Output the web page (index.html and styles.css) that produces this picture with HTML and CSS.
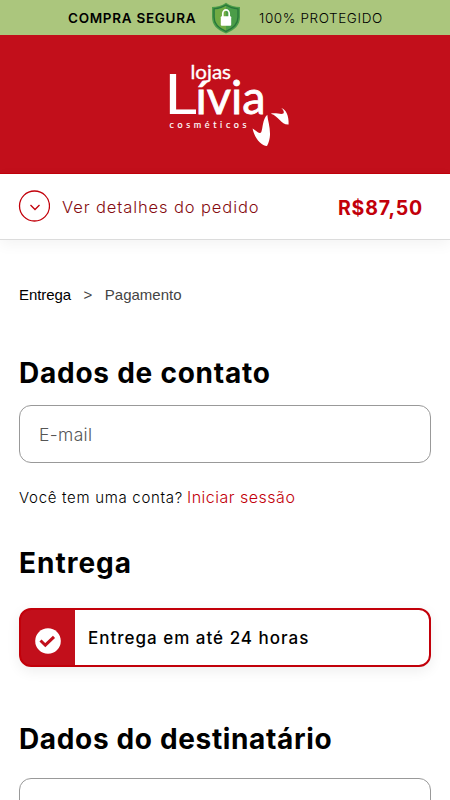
FILE: index.html
```html
<!DOCTYPE html>
<html lang="pt-BR">
<head>
<meta charset="utf-8">
<meta name="viewport" content="width=device-width, initial-scale=1">
<title>Lojas Lívia Cosméticos</title>
<link rel="stylesheet" href="styles.css">
</head>
<body>
<div class="secure-bar">
  <strong class="secure-title">COMPRA SEGURA</strong>
  <svg class="shield" viewBox="0 0 30 32" aria-hidden="true">
    <path d="M15 .8C11 4 6 5 1 5v10c0 8 5 13 14 16.500C24 28 29 23 29 15V5C24 5 19 4 15 .8z" fill="#4b9d48"/>
    <path d="M15 3C11 5.600 7 6.600 3 6.800V15c0 7 4 11 12 14.400C23 26 27 22 27 15V6.800C23 6.600 19 5.600 15 3z" fill="#4b9d48" stroke="#28763b" stroke-width="1.300"/>
    <path d="M15 4C11 6.500 8 7.200 4 7.500V15c0 6 3.500 10 11 13.400z" fill="#71ab43"/>
    <path d="M11.800 15v-3.500a3.200 3.600 0 0 1 6.400 0V15" fill="none" stroke="#fff" stroke-width="1.700"/>
    <rect x="9.800" y="14.300" width="10.400" height="9.500" rx="1" fill="#fff"/>
  </svg>
  <span class="secure-note">100% PROTEGIDO</span>
</div>
<header class="brand">
  <svg class="logo" viewBox="0 0 130 90" role="img" aria-label="Lojas Lívia Cosméticos">
    <g class="logo-text">
      <text class="logo-small" x="30.500" y="22.500" textLength="40.500" lengthAdjust="spacingAndGlyphs">lojas</text>
      <text class="logo-cap" x="4" y="58" textLength="33" lengthAdjust="spacingAndGlyphs">L</text>
      <text class="logo-name" x="35.500" y="58" textLength="70" lengthAdjust="spacingAndGlyphs">ívia</text>
      <text class="logo-tag" x="9.500" y="71.500" textLength="77">cosméticos</text>
    </g>
    <path class="logo-mark" d="M107.300 58.800C107.800 65 110.300 71 110 79C109.800 83 109 86 107 90C101 90 94 81 92.600 72.500C97 75.500 100 78.500 101.300 76C103 72 102.500 63 107.300 58.800z"/>
    <path class="logo-mark" d="M110.800 57.700C116 56.500 121 59 123.300 57.600C124.700 56 123 53.500 121.300 52.300C126 53 129 60 128.600 68.500C121 69 119 60 110.800 57.700z"/>
  </svg>
</header>
<section class="summary">
  <svg class="toggle" viewBox="0 0 32 32" aria-hidden="true">
    <circle cx="16.500" cy="16" r="15"/>
    <path d="M12.500 15l4.500 4.500 4.500-4.500"/>
  </svg>
  <span class="details">Ver detalhes do pedido</span>
  <strong class="price">R$87,50</strong>
</section>
<main class="checkout">
  <nav class="steps"><span class="current">Entrega</span><span class="sep">&gt;</span><span>Pagamento</span></nav>
  <h2 class="h-contact">Dados de contato</h2>
  <input class="field" type="email" placeholder="E-mail" aria-label="E-mail">
  <p class="account"><span class="question">Você tem uma conta?</span><a class="login">Iniciar sessão</a></p>
  <h2 class="h-delivery">Entrega</h2>
  <div class="option">
    <div class="option-check">
      <svg viewBox="0 0 26 26" aria-hidden="true">
        <circle cx="13" cy="13" r="12.800" fill="#fff"/>
        <path d="M5.500 12.500l4.800 4.700 8.700-8.400" fill="none" stroke="#c20f1b" stroke-width="3"/>
      </svg>
    </div>
    <span class="option-label">Entrega em até 24 horas</span>
  </div>
  <h2 class="h-recipient">Dados do destinatário</h2>
  <input class="field" type="text" aria-label="Nome">
</main>
</body>
</html>
```
FILE: styles.css
```css
* { box-sizing: border-box; }
html { overflow: hidden; }
body {
  margin: 0;
  height: 800px;
  overflow: hidden;
  background: #fff;
  color: #000;
  font-family: Inter, "Liberation Sans", sans-serif;
}
.secure-bar {
  height: 35px;
  display: flex;
  align-items: center;
  padding-left: 68px;
  background: #abc67d;
  font-size: 13.500px;
  white-space: nowrap;
}
.secure-title { width: 143px; font-weight: 600; letter-spacing: .7px; }
.shield { width: 30px; height: 32px; flex: none; }
.secure-note { margin-left: 18px; font-weight: 300; letter-spacing: .6px; }
.brand {
  height: 139px;
  padding: 21px 0 0 160px;
  background: #c20f1b;
  border-bottom: 1px solid #c2000a;
}
.logo { display: block; width: 130px; height: 90px; overflow: visible; }
.logo-text, .logo-mark { fill: #fff; }
.logo-text { font-family: Lato, sans-serif; font-variant-ligatures: none; }
.logo-small { font-size: 20px; stroke: #fff; stroke-width: .35px; }
.logo-cap { font-size: 57px; }
.logo-name { font-size: 46px; stroke: #fff; stroke-width: .8px; }
.logo-tag { font-size: 9px; font-weight: 400; stroke: #fff; stroke-width: .15px; }
.summary {
  height: 66px;
  display: flex;
  align-items: center;
  padding: 0 27px 0 18px;
  border-bottom: 1px solid #dcdcdc;
  box-shadow: 0 4px 14px rgba(0, 0, 0, .05);
  color: #c2000a;
}
.toggle { width: 32px; height: 32px; margin-top: -2px; fill: none; stroke: #c2000a; stroke-width: 1.300; }
.details { margin-left: 12px; color: #850b10; font-size: 16.500px; font-weight: 300; letter-spacing: .9px; }
.price { margin: 3px 0 0 auto; font-size: 19.500px; font-weight: 700; letter-spacing: .85px; }
.checkout { padding: 45px 19px 0; }
.steps {
  height: 20px;
  display: flex;
  align-items: center;
  color: #444;
  font: 15px/20px "Liberation Sans", Arial, sans-serif;
}
.current { color: #000; letter-spacing: -.07px; }
.sep { margin: 0 12.500px; }
h2 { margin: 0; height: 36px; line-height: 36px; font-size: 28px; font-weight: 700; white-space: nowrap; }
.h-contact { margin-top: 50px; letter-spacing: .76px; }
.field {
  display: block;
  width: 100%;
  height: 58px;
  margin: 14px 0 0;
  padding: 0 19px;
  border: 1px solid #999;
  border-radius: 12px;
  outline: 0;
  background: #fff;
  font: 300 17.500px Inter, sans-serif;
}
.field::placeholder { color: #555; opacity: 1; letter-spacing: .35px; }
.account { margin: 23px 0 0; height: 22px; display: flex; align-items: baseline; line-height: 22px; white-space: nowrap; }
.question { width: 168px; font-size: 15px; font-weight: 300; letter-spacing: .7px; }
.login { color: #c2000a; font-size: 16px; font-weight: 300; letter-spacing: .5px; }
.h-delivery { margin-top: 37px; letter-spacing: 1px; }
.option {
  height: 59px;
  margin-top: 27px;
  display: flex;
  align-items: center;
  border: 2px solid #c2000a;
  border-radius: 12px;
  background: linear-gradient(to right, #c20f1b 56px, #fff 56px) border-box;
  box-shadow: 0 4px 14px rgba(0, 0, 0, .07);
}
.option-check { width: 54px; height: 100%; padding: 18px 0 0 14px; }
.option-check svg { display: block; width: 26px; height: 26px; }
.option-label { margin-left: 13px; font-size: 17px; font-weight: 500; letter-spacing: 1px; }
.h-recipient { margin-top: 54px; letter-spacing: .65px; }
.h-recipient + .field { margin-top: 21px; }
```
